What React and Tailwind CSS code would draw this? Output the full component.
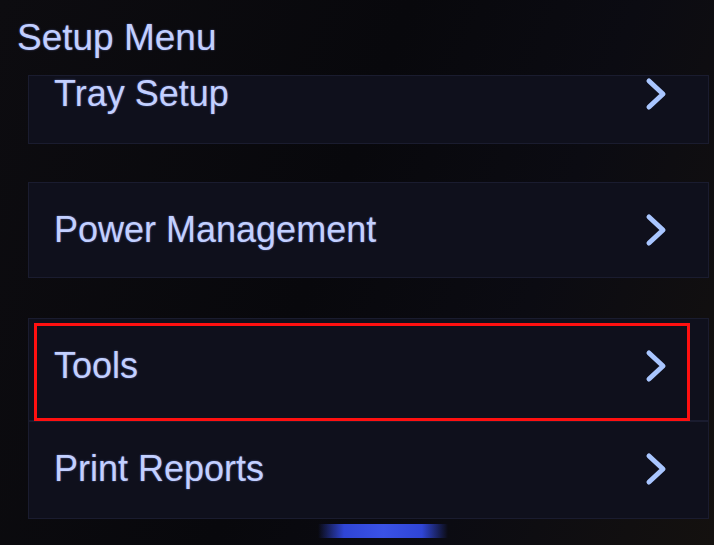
const Chevron = () => (
  <svg width="22" height="34" viewBox="0 0 22 34" className="shrink-0">
    <polyline
      points="4,4 18,17 4,30"
      fill="none"
      stroke="#a9c6ff"
      strokeWidth="5"
      strokeLinecap="round"
      strokeLinejoin="round"
    />
  </svg>
);

const MenuRow = ({ label, className = "", children }) => (
  <div
    className={`relative flex items-center justify-between pl-[25px] pr-[41px] bg-[#0f101c] border border-[#1a1c2f] ${className}`}
  >
    <span className="text-[36px] leading-none text-[#c3d0ff] [text-shadow:0_0_2px_rgba(140,160,255,0.6)]">
      {label}
    </span>
    <Chevron />
    {children}
  </div>
);

export default function App() {
  return (
    <div
      className="w-[714px] h-[545px] overflow-hidden bg-[linear-gradient(110deg,#0d0c10_0%,#08080c_45%,#0b0b12_70%,#14110f_100%)]"
      style={{ fontFamily: '"Liberation Sans", Arial, sans-serif' }}
    >
      <div className="pt-[19px] pl-[17px] text-[37px] leading-none text-[#c2cfff] [text-shadow:0_0_2px_rgba(140,160,255,0.6)]">
        Setup Menu
      </div>

      <div className="ml-[28px] mr-[5px] flex flex-col">
        <MenuRow label="Tray Setup" className="mt-[19px] h-[69px] pb-[32px]" />
        <MenuRow label="Power Management" className="mt-[38px] h-[96px]" />
        <MenuRow label="Tools" className="mt-[40px] h-[103px] pb-[8px]">
          <div className="absolute left-[5px] top-[4px] right-[18px] bottom-[-1px] border-[3px] border-[#ff1010]" />
        </MenuRow>
        <MenuRow label="Print Reports" className="h-[98px] pb-[3px]" />
      </div>

      <div className="mt-[5px] ml-[318px] w-[130px] h-[14px] bg-[linear-gradient(90deg,rgba(40,60,200,0)_0%,#2f45d6_20%,#3a52e6_50%,#2f45d6_80%,rgba(40,60,200,0)_100%)]" />
    </div>
  );
}
